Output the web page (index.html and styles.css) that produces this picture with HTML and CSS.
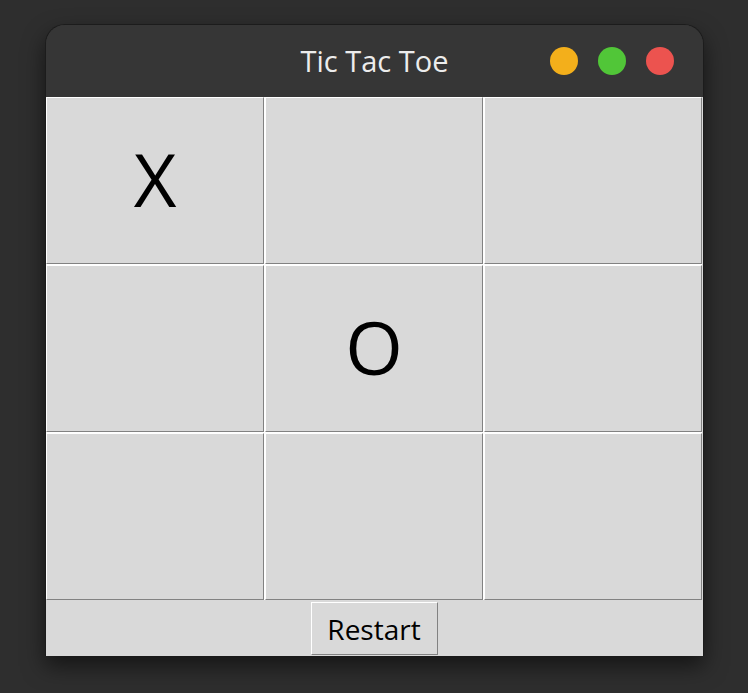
FILE: index.html
```
<!DOCTYPE html>
<html>
<head>
<meta charset="utf-8">
<link rel="stylesheet" href="styles.css">
</head>
<body>
<div class="window">
  <div class="titlebar">
    <div class="title">Tic Tac Toe</div>
    <div class="controls">
      <span class="dot yellow"></span>
      <span class="dot green"></span>
      <span class="dot red"></span>
    </div>
  </div>
  <div class="content">
    <div class="board">
      <div class="cell">X</div>
      <div class="cell"></div>
      <div class="cell"></div>
      <div class="cell"></div>
      <div class="cell">O</div>
      <div class="cell"></div>
      <div class="cell"></div>
      <div class="cell"></div>
      <div class="cell"></div>
    </div>
    <div class="footer">
      <button class="restart">Restart</button>
    </div>
  </div>
</div>
</body>
</html>
```
FILE: styles.css
```
html, body {
  margin: 0;
  padding: 0;
  background: #2e2e2e;
  width: 748px;
  height: 693px;
  overflow: hidden;
}
body {
  padding-top: 24px;
  padding-left: 45px;
  box-sizing: border-box;
  font-family: "Open Sans", "Noto Sans", sans-serif;
}
.window {
  width: 657px;
  border: 1px solid #1c1c1c;
  border-bottom: none;
  border-radius: 20px 20px 0 0;
  background: #353535;
  box-shadow: 0 10px 22px rgba(0, 0, 0, 0.55);
}
.titlebar {
  height: 72px;
  position: relative;
  display: flex;
  align-items: center;
  justify-content: center;
  border-radius: 19px 19px 0 0;
  background: #363636;
}
.title {
  color: #ececec;
  font-size: 29px;
  margin-top: -2px;
  margin-left: 0;
}
.controls {
  position: absolute;
  right: 29px;
  top: 22px;
  display: flex;
  gap: 20px;
}
.dot {
  width: 28px;
  height: 28px;
  border-radius: 50%;
  display: block;
}
.yellow { background: #f3af1b; }
.green { background: #51c638; }
.red { background: #ec534f; }
.content {
  background: #d9d9d9;
  width: 657px;
}
.board {
  width: 656px;
  display: grid;
  grid-template-columns: repeat(3, 218px);
  grid-template-rows: repeat(3, 167px);
  gap: 1px;
  background: #ffffff;
  border-bottom: 1px solid #d9d9d9;
}
.cell {
  background: #d9d9d9;
  border-top: 1px solid #ffffff;
  border-left: 1px solid #ffffff;
  border-right: 1px solid #828282;
  border-bottom: 1px solid #828282;
  display: flex;
  align-items: center;
  justify-content: center;
  font-size: 74px;
  color: #000;
  line-height: 1;
  padding-bottom: 4px;
  box-sizing: border-box;
}
.footer {
  height: 55px;
  display: flex;
  justify-content: center;
  align-items: flex-start;
  padding-top: 1px;
  box-sizing: border-box;
}
.restart {
  width: 127px;
  height: 53px;
  margin-left: -1px;
  background: #d9d9d9;
  border-top: 1px solid #ffffff;
  border-left: 1px solid #ffffff;
  border-right: 1px solid #828282;
  border-bottom: 1px solid #828282;
  font-family: "Open Sans", "Noto Sans", sans-serif;
  font-size: 28px;
  color: #000;
  padding: 0;
}
```
